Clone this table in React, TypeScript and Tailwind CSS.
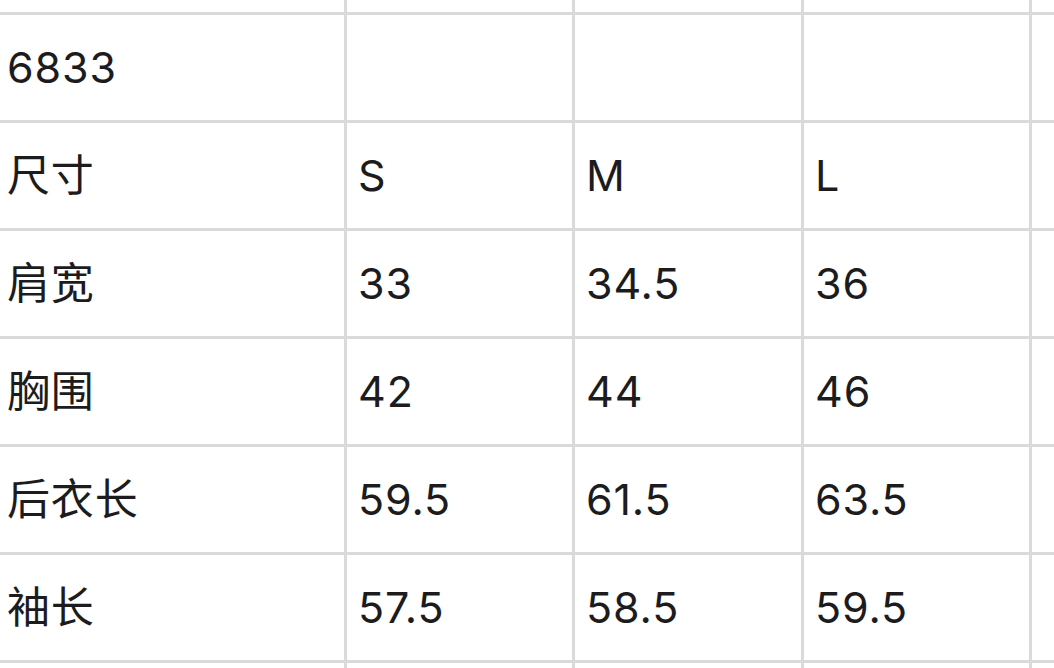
const ROWS: string[][] = [
  ['', '', '', ''],
  ['6833', '', '', ''],
  ['尺寸', 'S', 'M', 'L'],
  ['肩宽', '33', '34.5', '36'],
  ['胸围', '42', '44', '46'],
  ['后衣长', '59.5', '61.5', '63.5'],
  ['袖长', '57.5', '58.5', '59.5'],
  ['', '', '', ''],
]

export default function App() {
  return (
    <div className="w-[1054px] h-[668px] overflow-hidden bg-white">
      <div
        className="-mt-[93px] grid grid-cols-[344px_225px_226px_225px_1fr] auto-rows-[105px] gap-[3px] bg-[#dadada] text-[43px] text-[#1c1c1e]"
        style={{ fontFamily: 'Inter, "Noto Sans CJK SC", sans-serif' }}
      >
        {ROWS.map((row, r) =>
          [...row, ''].map((cell, c) => (
            <div
              key={`${r}-${c}`}
              className={`flex items-center bg-white leading-none tracking-[0.02em] ${c === 0 ? 'pl-[7px]' : 'pl-[11px]'}`}
            >
              {cell}
            </div>
          ))
        )}
      </div>
    </div>
  )
}
